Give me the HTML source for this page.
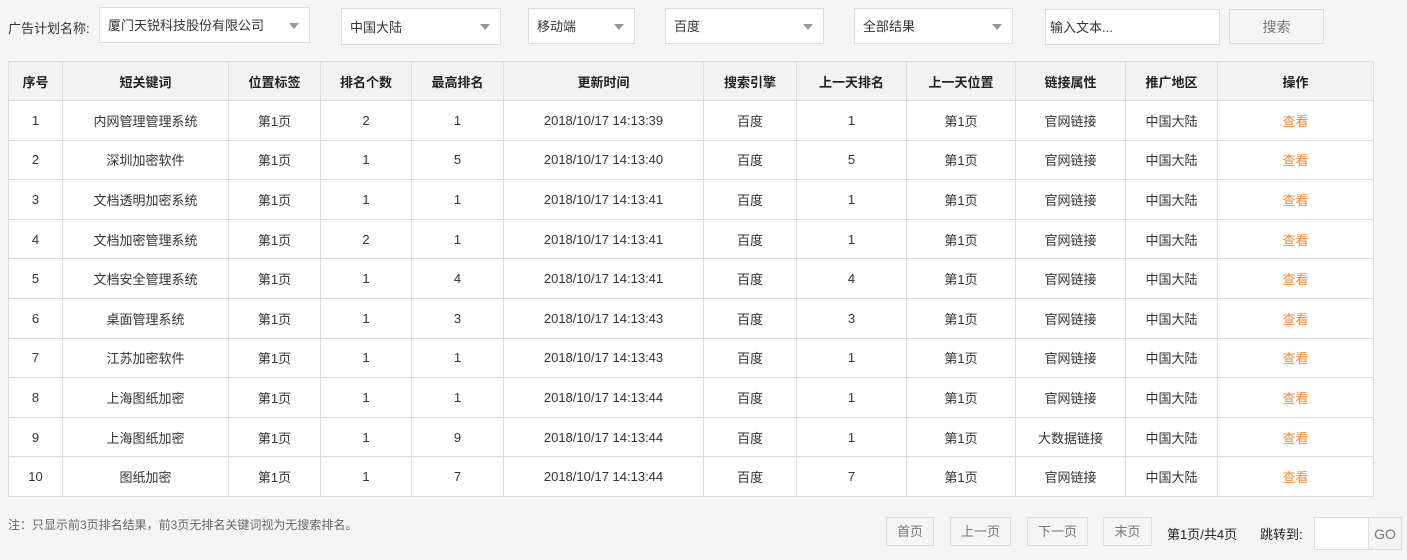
<!DOCTYPE html>
<html><head><meta charset="utf-8"><style>
*{box-sizing:border-box;margin:0;padding:0}
body{width:1407px;height:560px;background:#f5f5f5;font-family:"Liberation Sans","Noto Sans CJK SC",sans-serif;font-size:13px;color:#333;position:relative;overflow:hidden}
.a{position:absolute}
.sel{position:absolute;background:#fff;border:1px solid #ddd;padding-left:8px;line-height:36px;font-size:13px;color:#333}
.sel:after{content:"";position:absolute;right:10px;top:15px;border-left:5px solid transparent;border-right:5px solid transparent;border-top:6px solid #999}
table{position:absolute;left:8px;top:61px;border-collapse:collapse;background:#fff;table-layout:fixed}
td,th{border:1px solid #ddd;text-align:center;height:39.6px;font-size:13px}
th{background:#f2f2f2;font-weight:bold;color:#222;height:39px}
.o{color:#f08a3c}
.btn{position:absolute;border:1px solid #ddd;background:#f5f5f5;color:#777;text-align:center;font-size:13px}
</style></head><body>
<div class="a" style="left:8px;top:18px">广告计划名称:</div>
<div class="sel" style="left:99px;top:7px;width:211px;height:36px">厦门天锐科技股份有限公司</div>
<div class="sel" style="left:341px;top:8px;width:160px;height:37px;line-height:38px">中国大陆</div>
<div class="sel" style="left:528px;top:8px;width:107px;height:36px">移动端</div>
<div class="sel" style="left:665px;top:8px;width:159px;height:36px">百度</div>
<div class="sel" style="left:854px;top:8px;width:159px;height:36px">全部结果</div>
<div class="a" style="left:1045px;top:9px;width:175px;height:36px;background:#fff;border:1px solid #ddd;line-height:36px;padding-left:4px">输入文本...</div>
<div class="btn" style="left:1229px;top:9px;width:95px;height:35px;line-height:35px;font-size:14px">搜索</div>
<table>
<colgroup><col style="width:54px"><col style="width:166px"><col style="width:92px"><col style="width:91px"><col style="width:92px"><col style="width:200px"><col style="width:93px"><col style="width:110px"><col style="width:109px"><col style="width:110px"><col style="width:92px"><col style="width:156px"></colgroup>
<tr><th>序号</th><th>短关键词</th><th>位置标签</th><th>排名个数</th><th>最高排名</th><th>更新时间</th><th>搜索引擎</th><th>上一天排名</th><th>上一天位置</th><th>链接属性</th><th>推广地区</th><th>操作</th></tr>
<tr><td>1</td><td>内网管理管理系统</td><td>第1页</td><td>2</td><td>1</td><td>2018/10/17 14:13:39</td><td>百度</td><td>1</td><td>第1页</td><td>官网链接</td><td>中国大陆</td><td class="o">查看</td></tr>
<tr><td>2</td><td>深圳加密软件</td><td>第1页</td><td>1</td><td>5</td><td>2018/10/17 14:13:40</td><td>百度</td><td>5</td><td>第1页</td><td>官网链接</td><td>中国大陆</td><td class="o">查看</td></tr>
<tr><td>3</td><td>文档透明加密系统</td><td>第1页</td><td>1</td><td>1</td><td>2018/10/17 14:13:41</td><td>百度</td><td>1</td><td>第1页</td><td>官网链接</td><td>中国大陆</td><td class="o">查看</td></tr>
<tr><td>4</td><td>文档加密管理系统</td><td>第1页</td><td>2</td><td>1</td><td>2018/10/17 14:13:41</td><td>百度</td><td>1</td><td>第1页</td><td>官网链接</td><td>中国大陆</td><td class="o">查看</td></tr>
<tr><td>5</td><td>文档安全管理系统</td><td>第1页</td><td>1</td><td>4</td><td>2018/10/17 14:13:41</td><td>百度</td><td>4</td><td>第1页</td><td>官网链接</td><td>中国大陆</td><td class="o">查看</td></tr>
<tr><td>6</td><td>桌面管理系统</td><td>第1页</td><td>1</td><td>3</td><td>2018/10/17 14:13:43</td><td>百度</td><td>3</td><td>第1页</td><td>官网链接</td><td>中国大陆</td><td class="o">查看</td></tr>
<tr><td>7</td><td>江苏加密软件</td><td>第1页</td><td>1</td><td>1</td><td>2018/10/17 14:13:43</td><td>百度</td><td>1</td><td>第1页</td><td>官网链接</td><td>中国大陆</td><td class="o">查看</td></tr>
<tr><td>8</td><td>上海图纸加密</td><td>第1页</td><td>1</td><td>1</td><td>2018/10/17 14:13:44</td><td>百度</td><td>1</td><td>第1页</td><td>官网链接</td><td>中国大陆</td><td class="o">查看</td></tr>
<tr><td>9</td><td>上海图纸加密</td><td>第1页</td><td>1</td><td>9</td><td>2018/10/17 14:13:44</td><td>百度</td><td>1</td><td>第1页</td><td>大数据链接</td><td>中国大陆</td><td class="o">查看</td></tr>
<tr><td>10</td><td>图纸加密</td><td>第1页</td><td>1</td><td>7</td><td>2018/10/17 14:13:44</td><td>百度</td><td>7</td><td>第1页</td><td>官网链接</td><td>中国大陆</td><td class="o">查看</td></tr>
</table>
<div class="a" style="left:8px;top:516px;font-size:12px;color:#666">注：只显示前3页排名结果，前3页无排名关键词视为无搜索排名。</div>
<div class="btn" style="left:886px;top:517px;width:48px;height:29px;line-height:28px">首页</div>
<div class="btn" style="left:950px;top:517px;width:61px;height:29px;line-height:28px">上一页</div>
<div class="btn" style="left:1027px;top:517px;width:61px;height:29px;line-height:28px">下一页</div>
<div class="btn" style="left:1103px;top:517px;width:49px;height:29px;line-height:28px">末页</div>
<div class="a" style="left:1167px;top:524px;color:#222">第1页/共4页</div>
<div class="a" style="left:1260px;top:524px;color:#222">跳转到:</div>
<div class="a" style="left:1314px;top:517px;width:55px;height:33px;background:#fff;border:1px solid #ddd"></div>
<div class="btn" style="left:1368px;top:517px;width:34px;height:33px;line-height:33px;font-size:14px">GO</div>
</body></html>
